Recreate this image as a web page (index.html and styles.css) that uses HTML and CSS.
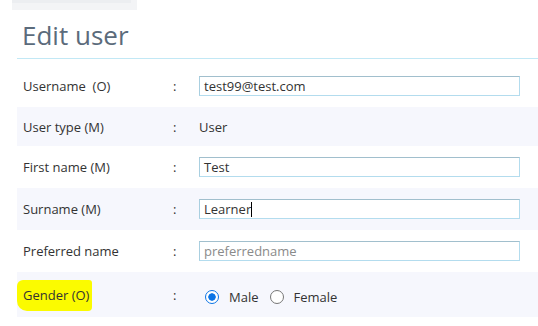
FILE: index.html
```html
<!DOCTYPE html>
<html>
<head>
<meta charset="utf-8">
<link rel="stylesheet" href="styles.css">
</head>
<body>
<div class="topbar"><div class="topbar-inner"></div></div>
<div class="page">
  <h1 class="title">Edit user</h1>
  <div class="form">
    <div class="row row-first">
      <div class="label">Username&nbsp; (O)</div>
      <div class="colon">:</div>
      <div class="value"><div class="input">test99@test.com</div></div>
    </div>
    <div class="row row-alt row-short">
      <div class="label">User type (M)</div>
      <div class="colon">:</div>
      <div class="value"><span class="plain">User</span></div>
    </div>
    <div class="row">
      <div class="label">First name (M)</div>
      <div class="colon">:</div>
      <div class="value"><div class="input">Test</div></div>
    </div>
    <div class="row row-alt">
      <div class="label">Surname (M)</div>
      <div class="colon">:</div>
      <div class="value"><div class="input">Learner<span class="caret"></span></div></div>
    </div>
    <div class="row">
      <div class="label">Preferred name</div>
      <div class="colon">:</div>
      <div class="value"><div class="input placeholder">preferredname</div></div>
    </div>
    <div class="row row-alt row-last">
      <div class="label"><span class="highlight">Gender (O)</span></div>
      <div class="colon">:</div>
      <div class="value radios">
        <span class="radio checked"></span><span class="radio-label">Male</span>
        <span class="radio"></span><span class="radio-label">Female</span>
      </div>
    </div>
  </div>
</div>
</body>
</html>
```
FILE: styles.css
```css
html, body {
  margin: 0;
  padding: 0;
  background: #ffffff;
}
body {
  font-family: "Open Sans", "DejaVu Sans", sans-serif;
  color: #333333;
  width: 538px;
  height: 326px;
  overflow: hidden;
}
.topbar {
  margin-left: 12px;
  width: 125px;
  height: 10px;
  background: #f3f4f6;
}
.topbar-inner {
  width: 119px;
  height: 3px;
  background: #eceef1;
}
.page {
  padding-left: 17px;
}
.title {
  margin: 9px 0 0 0;
  padding: 0 0 7px 5px;
  font-size: 26px;
  line-height: 32px;
  font-weight: 400;
  color: #5b6b7b;
}
.form {
  border-top: 1px solid #c2e8f5;
}
.row {
  display: grid;
  grid-template-columns: 150px 26px 1fr;
  align-items: center;
  height: 42px;
  padding-left: 6px;
  font-size: 13px;
}
.row-first {
  height: 42px;
  padding-top: 6px;
}
.row-short {
  height: 39px;
}
.row-last {
  height: 45px;
}
.row-alt {
  background: #f6f7fd;
}
.label {
  color: #333333;
  position: relative;
}
.colon {
  color: #333333;
}
.input {
  box-sizing: border-box;
  width: 321px;
  height: 20px;
  border: 1px solid #b3dcee;
  border-top-color: #a1bfcd;
  border-left-color: #a9cfe0;
  background: #ffffff;
  padding-left: 4px;
  line-height: 18px;
  color: #333333;
}
.placeholder {
  color: #8a8a8a;
}
.caret {
  display: inline-block;
  width: 1px;
  height: 15px;
  background: #000000;
  vertical-align: -3px;
}
.plain {
  color: #333333;
}
.radios {
  display: flex;
  align-items: center;
  padding-top: 4px;
}
.radio {
  box-sizing: border-box;
  width: 14px;
  height: 14px;
  border-radius: 50%;
  border: 1px solid #767676;
  background: #ffffff;
  margin-left: 6px;
}
.radio.checked {
  border: 1.5px solid #0b74e5;
  background: radial-gradient(circle, #0b74e5 0, #0b74e5 3.4px, #ffffff 4px);
}
.radio-label {
  margin-left: 10px;
  margin-right: 5px;
}
.highlight {
  background: #fbfb00;
  padding: 6px 3px 7px 6px;
  margin-left: -6px;
  border-radius: 6px 3px 4px 10px;
}
```
